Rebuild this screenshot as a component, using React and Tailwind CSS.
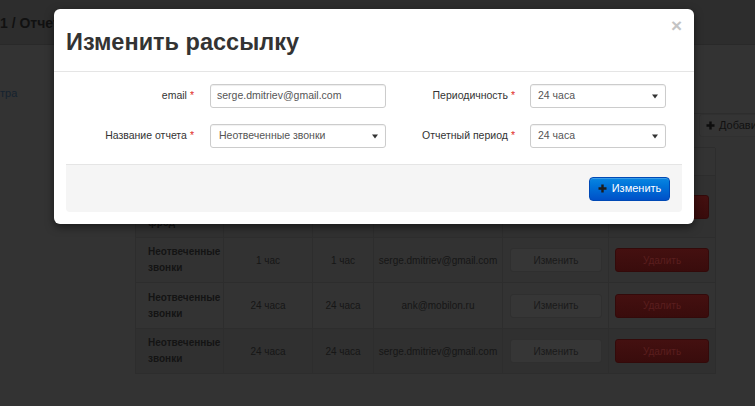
import React from "react";

const Plus = ({ c = "#222", s = 9 }) => (
  <svg width={s} height={s} viewBox="0 0 9 9">
    <path d="M4.5 0.5v8M0.5 4.5h8" stroke={c} strokeWidth="2.4" />
  </svg>
);

const Arrow = () => (
  <svg width="6" height="5" viewBox="0 0 6 5">
    <path d="M0 0.5h6L3 4.5z" fill="#333" />
  </svg>
);

const Req = () => <span className="text-[#e02b27] ml-[3px]">*</span>;

const Select = ({ w, text, pl }) => (
  <div
    className={`${w} h-[24px] flex items-center justify-between border border-[#ccc] rounded-[3px] bg-white ${pl} pr-[7px] text-[10.5px] text-[#555] shadow-[inset_0_1px_1px_rgba(0,0,0,0.06)]`}
  >
    <span>{text}</span>
    <Arrow />
  </div>
);

const rows = [
  { h: "h-[62px]", name: ["Неотвеченные", "звонки", "фрод"], a: "1 час", b: "1 час", e: "serge.dmitriev@gmail.com", bg: "bg-[#313131]" },
  { h: "h-[45px]", name: ["Неотвеченные", "звонки"], a: "1 час", b: "1 час", e: "serge.dmitriev@gmail.com", bg: "bg-[#323232]" },
  { h: "h-[46px]", name: ["Неотвеченные", "звонки"], a: "24 часа", b: "24 часа", e: "ank@mobilon.ru", bg: "bg-[#333333]" },
  { h: "h-[45px]", name: ["Неотвеченные", "звонки"], a: "24 часа", b: "24 часа", e: "serge.dmitriev@gmail.com", bg: "bg-[#303030]" },
];

const cell = "border-r border-b border-[#2d2d2d] flex items-center";

export default function App() {
  return (
    <div className="relative w-[755px] h-[406px] overflow-hidden bg-[#333333] font-['Liberation_Sans',Arial,sans-serif]">
      {/* underlying page (dimmed by backdrop) */}
      <div className="h-[45px] bg-[#2d2d2d] border-b border-[#292929] pt-[11px]">
        <span className="text-[14px] font-bold leading-[16px] text-[#111]">1 / Отчеты по рассылке</span>
      </div>
      <div className="flex">
        <div className="w-[135px] shrink-0 pt-[35px]">
          <span className="text-[11px] leading-[16px] text-[#15222f]">тра</span>
        </div>
        <div className="flex-1 pt-[68px]">
          <div className="h-[34px] border-t border-[#2d2d2d] flex items-start pl-[564px]">
            <div className="h-[23px] flex items-center gap-[4px] px-[6px] bg-[#343434] border border-[#303030] rounded-[3px] whitespace-nowrap text-[11px] text-[#111]">
              <Plus c="#0d0d0d" />
              <span>Добавить</span>
            </div>
          </div>
          <div className="w-[580px] grid grid-cols-[88px_89px_61px_129px_106px_107px] border-l border-t border-[#2d2d2d] text-[10px] text-[#161616]">
            <div className={`${cell} h-[28px] px-[12px] font-bold`}>Название</div>
            <div className={`${cell} h-[28px] justify-center font-bold`}>Период</div>
            <div className={`${cell} h-[28px] justify-center font-bold`}>Отчет</div>
            <div className={`${cell} h-[28px] justify-center font-bold`}>Email</div>
            <div className={`${cell} h-[28px]`}></div>
            <div className={`${cell} h-[28px]`}></div>
            {rows.map((r, i) => (
              <React.Fragment key={i}>
                <div className={`${cell} ${r.h} ${r.bg} px-[12px] font-bold leading-[16px] text-[#141414]`}>
                  <div>
                    {r.name.map((n) => (
                      <div key={n}>{n}</div>
                    ))}
                  </div>
                </div>
                <div className={`${cell} ${r.h} ${r.bg} justify-center`}>{r.a}</div>
                <div className={`${cell} ${r.h} ${r.bg} justify-center`}>{r.b}</div>
                <div className={`${cell} ${r.h} ${r.bg} justify-center`}>{r.e}</div>
                <div className={`${cell} ${r.h} ${r.bg} pl-[7px]`}>
                  <div className="w-[92px] h-[24px] flex items-center justify-center rounded-[3px] bg-[#363636] border border-[#2f2f2f] text-[#1a1a1a]">
                    Изменить
                  </div>
                </div>
                <div className={`${cell} ${r.h} ${r.bg} pl-[6px]`}>
                  <div className="w-[94px] h-[24px] flex items-center justify-center rounded-[3px] bg-linear-to-b from-[#441010] to-[#390c0c] border border-[#330a0a] text-[#5a1e1e]">
                    Удалить
                  </div>
                </div>
              </React.Fragment>
            ))}
          </div>
        </div>
      </div>

      {/* modal */}
      <div className="absolute left-[54px] top-[9px] w-[640px] bg-white rounded-[6px] shadow-[0_3px_9px_rgba(0,0,0,0.5)]">
        <div className="relative px-[12px] pt-[18px] pb-[14px] border-b border-[#e5e5e5]">
          <h3 className="text-[23.5px] font-bold leading-[30px] text-[#333]">Изменить рассылку</h3>
          <span className="absolute right-[12px] top-[7px] text-[19px] font-bold leading-[19px] text-[#c4c4c4]">×</span>
        </div>
        <div className="px-[12px] pt-[12px] pb-[12px]">
          <div className="flex flex-col gap-[16px] text-[10.5px] text-[#333]">
            <div className="flex items-center h-[24px]">
              <div className="w-[128px] text-right">
                email<Req />
              </div>
              <div className="ml-[16px] w-[176px] h-[24px] flex items-center border border-[#ccc] rounded-[3px] px-[6px] text-[#555] shadow-[inset_0_1px_1px_rgba(0,0,0,0.075)]">
                serge.dmitriev@gmail.com
              </div>
              <div className="w-[129px] text-right">
                Периодичность<Req />
              </div>
              <div className="ml-[15px]">
                <Select w="w-[136px]" text="24 часа" pl="pl-[7px]" />
              </div>
            </div>
            <div className="flex items-center h-[24px]">
              <div className="w-[128px] text-right">
                Название отчета<Req />
              </div>
              <div className="ml-[16px]">
                <Select w="w-[176px]" text="Неотвеченные звонки" pl="pl-[8px]" />
              </div>
              <div className="w-[129px] text-right">
                Отчетный период<Req />
              </div>
              <div className="ml-[15px]">
                <Select w="w-[136px]" text="24 часа" pl="pl-[7px]" />
              </div>
            </div>
          </div>
          <div className="mt-[16px] h-[48px] border-t border-[#e5e5e5] bg-[#f5f5f5] rounded-b-[4px] flex items-center justify-end pr-[12px]">
            <div className="w-[81px] h-[24px] flex items-center justify-center gap-[5px] rounded-[4px] border border-[#0049b5] bg-linear-to-b from-[#0a86e2] to-[#0050c8] text-white text-[11px] shadow-[inset_0_1px_0_rgba(255,255,255,0.2)]">
              <Plus c="#1c1c1c" />
              <span>Изменить</span>
            </div>
          </div>
        </div>
      </div>
    </div>
  );
}
